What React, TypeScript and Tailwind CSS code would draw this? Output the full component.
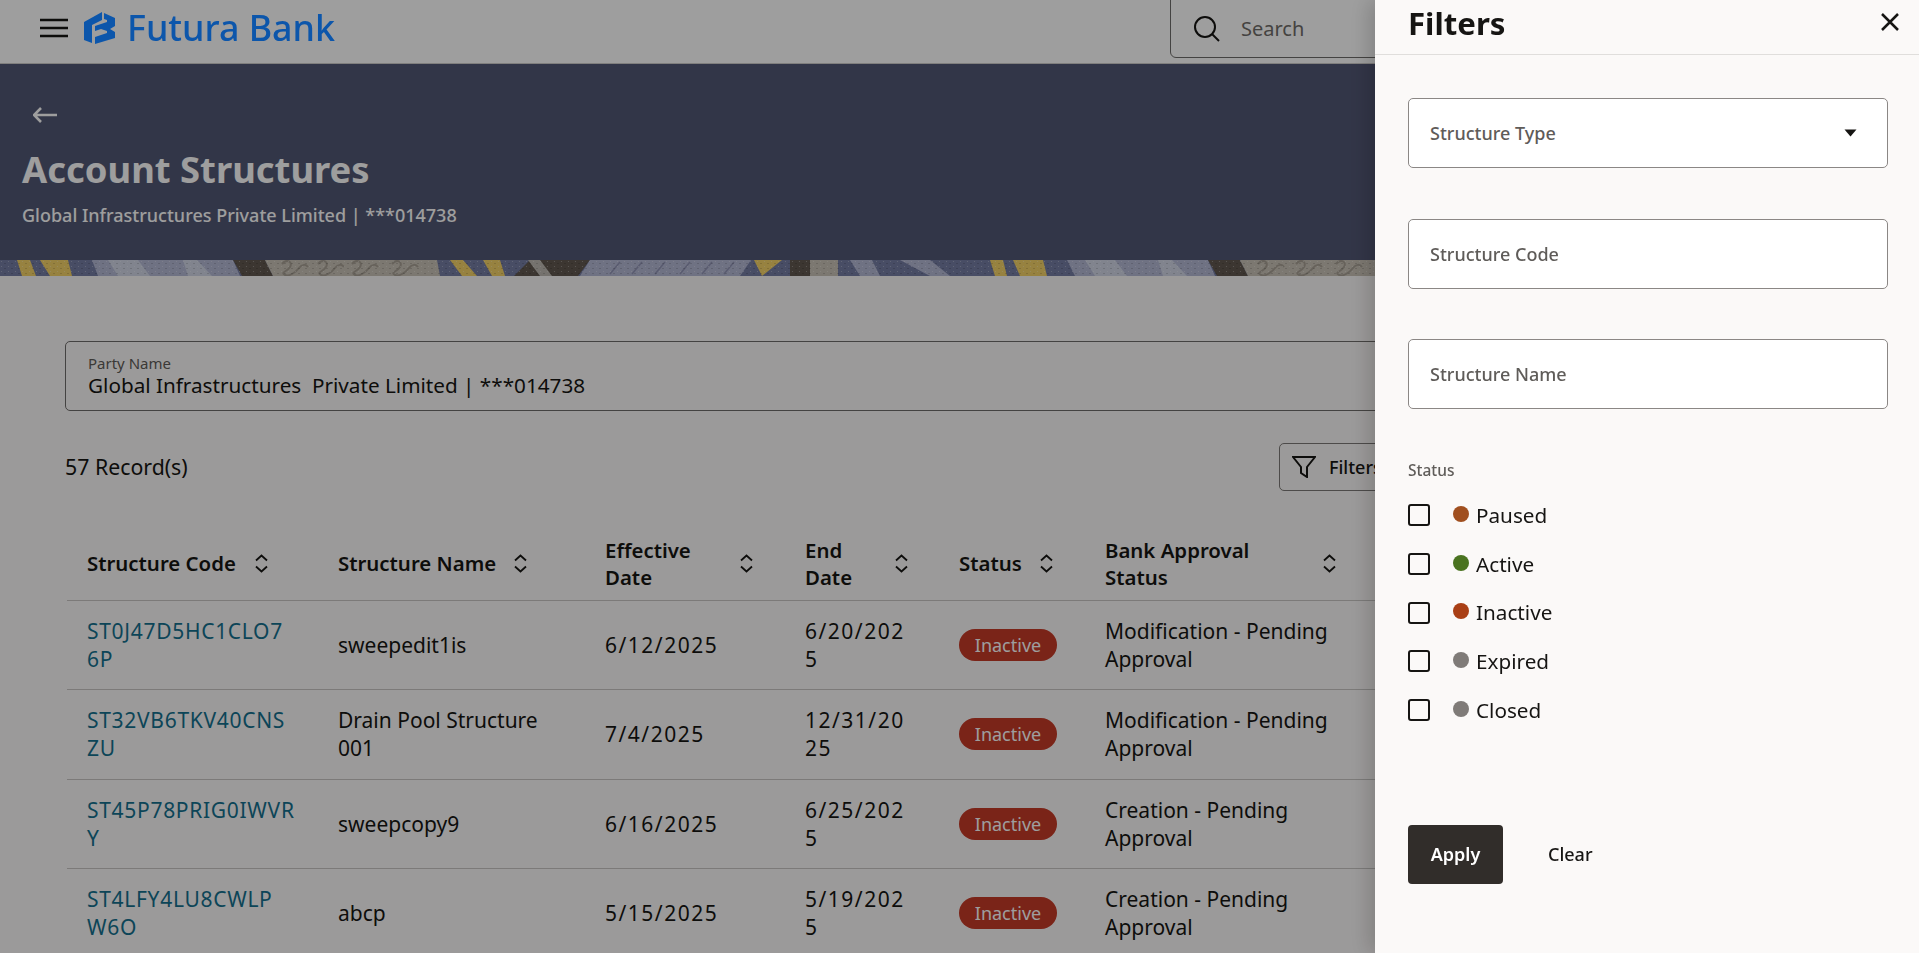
import React from "react";

// line breaks in the codes are where the narrow column wraps them
const rows = [
  { code: "ST0J47D5HC1CLO7\n6P", name: "sweepedit1is", start: "6/12/2025", end: "6/20/2025", approval: "Modification - Pending Approval" },
  { code: "ST32VB6TKV40CNS\nZU", name: "Drain Pool Structure 001", start: "7/4/2025", end: "12/31/2025", approval: "Modification - Pending Approval" },
  { code: "ST45P78PRIG0IWVR\nY", name: "sweepcopy9", start: "6/16/2025", end: "6/25/2025", approval: "Creation - Pending Approval" },
  { code: "ST4LFY4LU8CWLP\nW6O", name: "abcp", start: "5/15/2025", end: "5/19/2025", approval: "Creation - Pending Approval" },
];

const columns = [
  { label: "Structure Code", width: "w-[251px]", inner: "w-[182px]", text: "" },
  { label: "Structure Name", width: "w-[267px]", inner: "w-[190px]", text: "" },
  { label: "Effective Date", width: "w-[200px]", inner: "w-[149px]", text: "w-[100px]" },
  { label: "End Date", width: "w-[154px]", inner: "w-[104px]", text: "w-[60px]" },
  { label: "Status", width: "w-[146px]", inner: "w-[95px]", text: "" },
  { label: "Bank Approval Status", width: "w-[272px]", inner: "w-[232px]", text: "w-[170px]" },
];

const statuses = [
  { label: "Paused", dot: "bg-[#a04f1f]" },
  { label: "Active", dot: "bg-[#4a7320]" },
  { label: "Inactive", dot: "bg-[#a93f15]" },
  { label: "Expired", dot: "bg-[#7f7b78]" },
  { label: "Closed", dot: "bg-[#7f7b78]" },
];

const GOLD = "#f4d268";
const LAV = "#b4b8d4";
const LIGHT = "#d0d6e6";
const DARK = "#615850";
const TAN = "#c9c2b6";

// pieces of the banner artwork
const stripShapes: { points: string; fill: string }[] = [
  { points: "17,0 30,0 36,16 22,16", fill: GOLD },
  { points: "40,0 68,0 72,16 50,16", fill: GOLD },
  { points: "92,0 233,0 240,16 98,16", fill: LAV },
  { points: "108,0 138,0 150,16 118,16", fill: LIGHT },
  { points: "183,0 197,0 212,16 188,16", fill: LIGHT },
  { points: "233,0 265,0 273,16 242,16", fill: DARK },
  { points: "265,0 437,0 440,16 273,16", fill: TAN },
  { points: "450,0 463,0 477,16 462,16", fill: GOLD },
  { points: "483,0 500,0 505,16 492,16", fill: GOLD },
  { points: "514,16 530,0 590,0 578,16", fill: DARK },
  { points: "528,0 540,0 552,16 540,16", fill: "#bdb9b2" },
  { points: "590,0 751,0 740,16 580,16", fill: LAV },
  { points: "754,0 782,0 762,16", fill: GOLD },
  { points: "790,0 810,0 810,16 790,16", fill: DARK },
  { points: "810,0 838,0 838,16 810,16", fill: TAN },
  { points: "850,0 872,0 880,16 860,16", fill: LAV },
  { points: "900,0 930,0 950,16 930,16", fill: LAV },
  { points: "990,0 1003,0 1007,16 995,16", fill: GOLD },
  { points: "1013,0 1043,0 1047,16 1020,16", fill: GOLD },
  { points: "1067,0 1208,0 1215,16 1075,16", fill: LAV },
  { points: "1085,0 1115,0 1127,16 1095,16", fill: LIGHT },
  { points: "1158,0 1172,0 1187,16 1163,16", fill: LIGHT },
  { points: "1208,0 1240,0 1248,16 1217,16", fill: DARK },
  { points: "1240,0 1375,0 1375,16 1248,16", fill: TAN },
];

const squiggles = [282, 318, 352, 392, 1258, 1296, 1336];
const hashes = [610, 632, 655, 680, 702, 724];

const StripArt = () => (
  <svg className="block w-full h-4" viewBox="0 0 1919 16" preserveAspectRatio="none">
    <defs>
      <pattern id="speck" width="7" height="5" patternUnits="userSpaceOnUse">
        <circle cx="1.5" cy="1.5" r="0.6" fill="#fff" opacity="0.35" />
        <circle cx="5" cy="3.5" r="0.6" fill="#000" opacity="0.3" />
      </pattern>
    </defs>
    <rect width="1919" height="16" fill="#747ca3" />
    {stripShapes.map((s) => (
      <polygon key={s.points} points={s.points} fill={s.fill} />
    ))}
    {squiggles.map((x) => (
      <path
        key={x}
        d={`M${x} 4c5-6 11-2 8 3s-10 5-5 8c4 2 11-3 14-7s7-4 9-1`}
        fill="none"
        stroke="#a69f94"
        strokeWidth="2"
      />
    ))}
    {hashes.map((x) => (
      <path key={x} d={`M${x} 14 ${x + 10} 2`} stroke="#9094b4" strokeWidth="1.5" />
    ))}
    <rect width="1919" height="16" fill="url(#speck)" />
  </svg>
);

const SortIcon = () => (
  <svg width="15" height="19" viewBox="0 0 15 19" fill="none" stroke="#161513" strokeWidth="1.8" className="shrink-0">
    <path d="M2 6.5 7.5 1.5 13 6.5" />
    <path d="M2 12.5 7.5 17.5 13 12.5" />
  </svg>
);

const FieldBox = ({ label, arrow }: { label: string; arrow?: boolean }) => (
  <div className="h-[70px] bg-white border border-[#8b8785] rounded-[5px] flex items-center justify-between pl-[21px] pr-[30px]">
    <span className="pt-[1px] text-[18px] font-medium text-[#5f5c59]">{label}</span>
    {arrow && (
      <svg width="13" height="8" viewBox="0 0 13 8" fill="#161513">
        <path d="M0.5 0.5h12L6.5 7.5z" />
      </svg>
    )}
  </div>
);

const App = () => {
  return (
    <div className="relative w-full h-[953px] overflow-hidden bg-[#fbf9f8] font-['Noto_Sans',sans-serif] text-[#161513]">
      {/* top bar */}
      <header className="h-[64px] bg-white border-b border-[#cfcdcb] flex items-center pl-[40px] pb-[7px]">
        <svg width="28" height="20" viewBox="0 0 28 20" stroke="#161513" strokeWidth="2.6" className="shrink-0">
          <path d="M0 2h28M0 10h28M0 18h28" />
        </svg>
        <div className="relative z-10 flex items-center w-[265px]">
          <svg width="31" height="32" viewBox="0 0 31 32" fill="#0c56ab" className="ml-[16px] shrink-0">
            <path d="M0 10 18 0V8L8 13V31L0 28Z" />
            <path d="M20 1 31 6V14L26 17 31 20V26L11 32V25L23 21V19L17 17 11 19V14L23 10V8L20 7Z" />
          </svg>
          <span className="ml-[12px] text-[35.8px] leading-none font-medium text-[#0c56ab] whitespace-nowrap">Futura Bank</span>
        </div>
        <div className="ml-[837px] self-start -mt-[7px] h-[65px] w-[600px] shrink-0 border border-[#6f6d6b] rounded-[6px] flex items-center pl-[23px] pt-[7px]">
          <svg width="26" height="26" viewBox="0 0 26 26" fill="none" stroke="#161513" strokeWidth="2">
            <circle cx="11" cy="11" r="10" />
            <path d="M18 18 25 25" />
          </svg>
          <span className="ml-[21px] text-[20px] text-[#6f6c69]">Search</span>
        </div>
      </header>

      {/* banner */}
      <section className="h-[212px] bg-[#525774] flex flex-col text-white">
        <div className="flex-1 pl-[22px] pt-[39px]">
          <svg width="36" height="24" viewBox="0 0 36 24" fill="none" stroke="#fff" strokeWidth="2.6" className="ml-[11px]">
            <path d="M1 12H24M8 5 1 12 8 19" />
          </svg>
          <h1 className="mt-[20px] text-[36.4px] leading-[44px] font-bold">Account Structures</h1>
          <p className="mt-[12px] text-[18px] leading-[24px] font-medium">Global Infrastructures Private Limited | ***014738</p>
        </div>
        <StripArt />
      </section>

      {/* content */}
      <main className="pl-[65px] pr-[66px] pt-[65px]">
        <div className="h-[70px] border border-[#6f6d6b] rounded-[5px] pl-[22px] pt-[12px]">
          <div className="text-[15px] leading-[18px] text-[#5f5c59]">Party Name</div>
          <div className="text-[20.7px] leading-[27px] whitespace-pre">Global Infrastructures  Private Limited | ***014738</div>
        </div>

        <div className="mt-[32px] h-[48px] flex items-center justify-between">
          <span className="text-[21.3px]">57 Record(s)</span>
          <div className="h-[48px] w-[150px] mr-[424px] border border-[#7d7a78] rounded-[5px] flex items-center pl-[12px] text-[18px] font-medium">
            <svg width="24" height="22" viewBox="0 0 24 22" fill="none" stroke="#161513" strokeWidth="2">
              <path d="M1 1H23L15 11V21L9 17V11Z" />
            </svg>
            <span className="ml-[13px]">Filters</span>
          </div>
        </div>

        <table className="mt-[37px] ml-[2px] w-[1787px] table-fixed border-collapse">
          <colgroup>
            {columns.map((c) => (
              <col key={c.label} className={c.width} />
            ))}
            <col />
          </colgroup>
          <thead>
            <tr className="h-[72px] border-b border-[#c8c6c4]">
              {columns.map((c) => (
                <th key={c.label} className="pl-[20px] text-left font-semibold text-[20.4px] leading-[27px]">
                  <div className={`flex items-center justify-between ${c.inner}`}>
                    <span className={c.text}>{c.label}</span>
                    <SortIcon />
                  </div>
                </th>
              ))}
              <th />
            </tr>
          </thead>
          <tbody>
            {rows.map((r) => (
              <tr key={r.code} className="h-[89.5px] border-b border-[#c8c6c4] text-[21px] leading-[28px]">
                <td className="pl-[20px] whitespace-pre-line tracking-[0.7px] text-[#14708f]">{r.code}</td>
                <td className="px-[20px]">{r.name}</td>
                <td className="px-[20px] tracking-[1.5px]">{r.start}</td>
                <td className="pl-[20px] pr-[30px] break-all tracking-[1.5px]">{r.end}</td>
                <td className="px-[20px]">
                  <span className="inline-flex h-[32px] w-[98px] items-center justify-center rounded-full bg-[#c63a28] text-white text-[18px]">
                    Inactive
                  </span>
                </td>
                <td className="px-[20px]">{r.approval}</td>
                <td />
              </tr>
            ))}
          </tbody>
        </table>
      </main>

      {/* dim layer */}
      <div className="fixed inset-0 bg-black/[0.38]" />

      {/* filter drawer */}
      <aside className="fixed top-0 right-0 bottom-0 z-20 w-[544px] bg-[#fbf9f8] shadow-[-6px_0_20px_rgba(0,0,0,0.18)] flex flex-col">
        <div className="h-[55px] shrink-0 border-b border-[#e0dedc] flex justify-between pl-[33px] pr-[19px]">
          <h2 className="text-[31.2px] leading-[47px] font-bold">Filters</h2>
          <svg width="20" height="20" viewBox="0 0 20 20" fill="none" stroke="#161513" strokeWidth="2.5" className="mt-[12px]">
            <path d="M2 2 18 18M18 2 2 18" />
          </svg>
        </div>
        <div className="flex-1 pt-[43px] px-[33px] pr-[31px]">
          <div className="flex flex-col gap-[51px]">
            <FieldBox label="Structure Type" arrow />
            <div className="-mb-[1px]">
              <FieldBox label="Structure Code" />
            </div>
            <div className="pb-[1px]">
              <div className="pt-[1px] -mt-[1px]">
                <FieldBox label="Structure Name" />
              </div>
            </div>
          </div>
          <div className="mt-[50px] text-[15.5px] leading-[20px] font-medium text-[#5f5c59]">Status</div>
          <div className="mt-[11px] flex flex-col">
            {statuses.map((s) => (
              <label key={s.label} className="h-[48.7px] flex items-center">
                <span className="w-[22px] h-[22px] border-2 border-[#161513] rounded-[3px] bg-transparent" />
                <span className={`ml-[23px] -mt-[3px] w-[16px] h-[16px] rounded-full ${s.dot}`} />
                <span className="ml-[7px] text-[20.7px]">{s.label}</span>
              </label>
            ))}
          </div>
          <div className="mt-[91px] flex items-center">
            <button className="w-[95px] h-[59px] rounded-[4px] bg-[#312d2a] text-white text-[18px] font-semibold">Apply</button>
            <button className="ml-[45px] text-[18px] font-medium">Clear</button>
          </div>
        </div>
      </aside>
    </div>
  );
};

export default App;
